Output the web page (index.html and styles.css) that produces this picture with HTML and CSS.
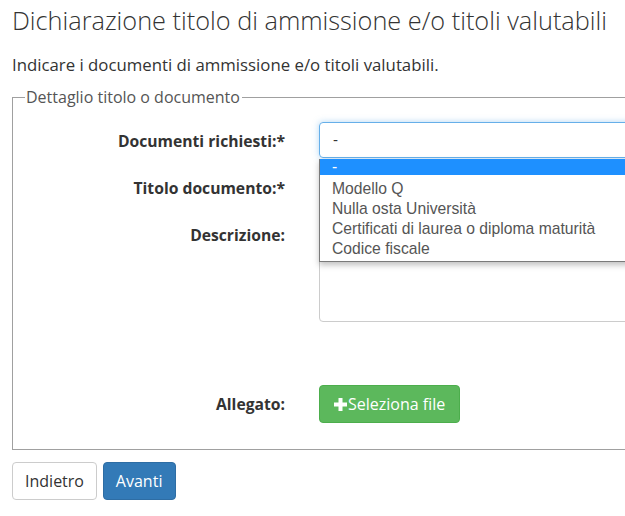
FILE: index.html
```html
<!DOCTYPE html>
<html lang="it">
<head>
<meta charset="UTF-8" />
<meta name="viewport" content="width=device-width, initial-scale=1.0"/>
<title>Dichiarazione titolo di ammissione</title>
<link rel="stylesheet" href="styles.css">
</head>
<body>
<div class="page">
  <h1>Dichiarazione titolo di ammissione e/o titoli valutabili</h1>
  <p class="intro">Indicare i documenti di ammissione e/o titoli valutabili.</p>

  <fieldset class="detail">
    <legend>Dettaglio titolo o documento</legend>

    <div class="form-row">
      <label>Documenti richiesti:*</label>
      <div class="control">
        <div class="select focused">-</div>
        <!-- open dropdown list -->
        <ul class="options">
          <li class="active">-</li>
          <li>Modello Q</li>
          <li>Nulla osta Università</li>
          <li>Certificati di laurea o diploma maturità</li>
          <li>Codice fiscale</li>
        </ul>
      </div>
    </div>

    <div class="form-row">
      <label>Titolo documento:*</label>
      <div class="control"><div class="input"></div></div>
    </div>

    <div class="form-row">
      <label>Descrizione:</label>
      <div class="control"><div class="input textarea"></div></div>
    </div>

    <div class="form-row file-row">
      <label>Allegato:</label>
      <div class="control">
        <button class="btn btn-green">
          <svg class="plus" width="13" height="13" viewBox="0 0 13 13"><path d="M4.5 0h4v4.5H13v4H8.5V13h-4V8.5H0v-4h4.5z" fill="#fff"/></svg>Seleziona file
        </button>
      </div>
    </div>
  </fieldset>

  <div class="actions">
    <button class="btn btn-default">Indietro</button>
    <button class="btn btn-blue">Avanti</button>
  </div>
</div>
</body>
</html>
```

FILE: styles.css
```css
html, body {
  margin: 0;
  padding: 0;
  overflow: hidden;
  background: #fff;
}
body {
  font-family: "Open Sans", sans-serif;
  font-size: 14px;
  color: #333;
}
.page {
  width: 760px;
  padding: 0 12px;
}
h1 {
  font-size: 25.3px;
  font-weight: 350;
  margin: 4px 0 0;
  line-height: 32px;
  color: #333;
}
.intro {
  font-size: 16.8px;
  margin: 18px 0 0;
  line-height: 22px;
}
.detail {
  margin: 11px 0 0;
  padding: 15px 0 26px;
  border: 1px solid #a0a0a0;
}
.detail legend {
  margin-left: 12px;
  padding: 0 2px 0 1px;
  color: #555;
  font-size: 16px;
  line-height: 20px;
}
.form-row {
  display: grid;
  grid-template-columns: 272px 1fr;
  column-gap: 34px;
  margin-bottom: 11px;
}
.form-row label {
  text-align: right;
  font-weight: 700;
  font-size: 15.7px;
  line-height: 20px;
  padding-top: 9px;
}
.control {
  position: relative;
}
.select, .input {
  height: 36px;
  border: 1px solid #ccc;
  border-radius: 4px;
  box-sizing: border-box;
  padding: 7px 13px;
  line-height: 20px;
  font-family: "Liberation Sans", Arial, sans-serif;
  font-size: 15px;
}
.select.focused {
  border-color: #66afe9;
  box-shadow: 0 0 6px rgba(102, 175, 233, 0.5);
}
.textarea {
  height: 106px;
}
.file-row {
  margin-top: 63px;
  margin-bottom: 0;
}
.options {
  position: absolute;
  top: 37px;
  left: 0;
  width: 420px;
  margin: 0;
  padding: 0 0 2px;
  list-style: none;
  background: #fff;
  border: 1px solid #7a7a7a;
  border-top: 0;
  box-shadow: 0 3px 6px rgba(0, 0, 0, 0.25);
  font-family: "Liberation Sans", Arial, sans-serif;
  font-size: 15.7px;
  color: #555;
  z-index: 2;
}
.options li {
  height: 20px;
  line-height: 20px;
  padding-left: 12px;
}
.options li.active {
  height: 16px;
  line-height: 16px;
  margin-bottom: 4px;
  background: #1e90ff;
  color: #fff;
}
.btn {
  font-family: "Open Sans", sans-serif;
  font-stretch: 92%;
  font-size: 16px;
  border-radius: 4px;
  border: 1px solid transparent;
  height: 38px;
  padding: 0;
  cursor: pointer;
  vertical-align: top;
}
.btn-green {
  display: flex;
  align-items: center;
  width: 141px;
  background: #5cb85c;
  border-color: #4cae4c;
  color: #fff;
  padding: 0 0 0 14px;
}
.plus {
  margin-right: 1px;
}
.btn-default {
  width: 85px;
  background: #fff;
  border-color: #ccc;
  color: #333;
}
.btn-blue {
  width: 73px;
  background: #337ab7;
  border-color: #2e6da4;
  color: #fff;
  margin-left: 2px;
}
.actions {
  margin-top: 12px;
}
```
